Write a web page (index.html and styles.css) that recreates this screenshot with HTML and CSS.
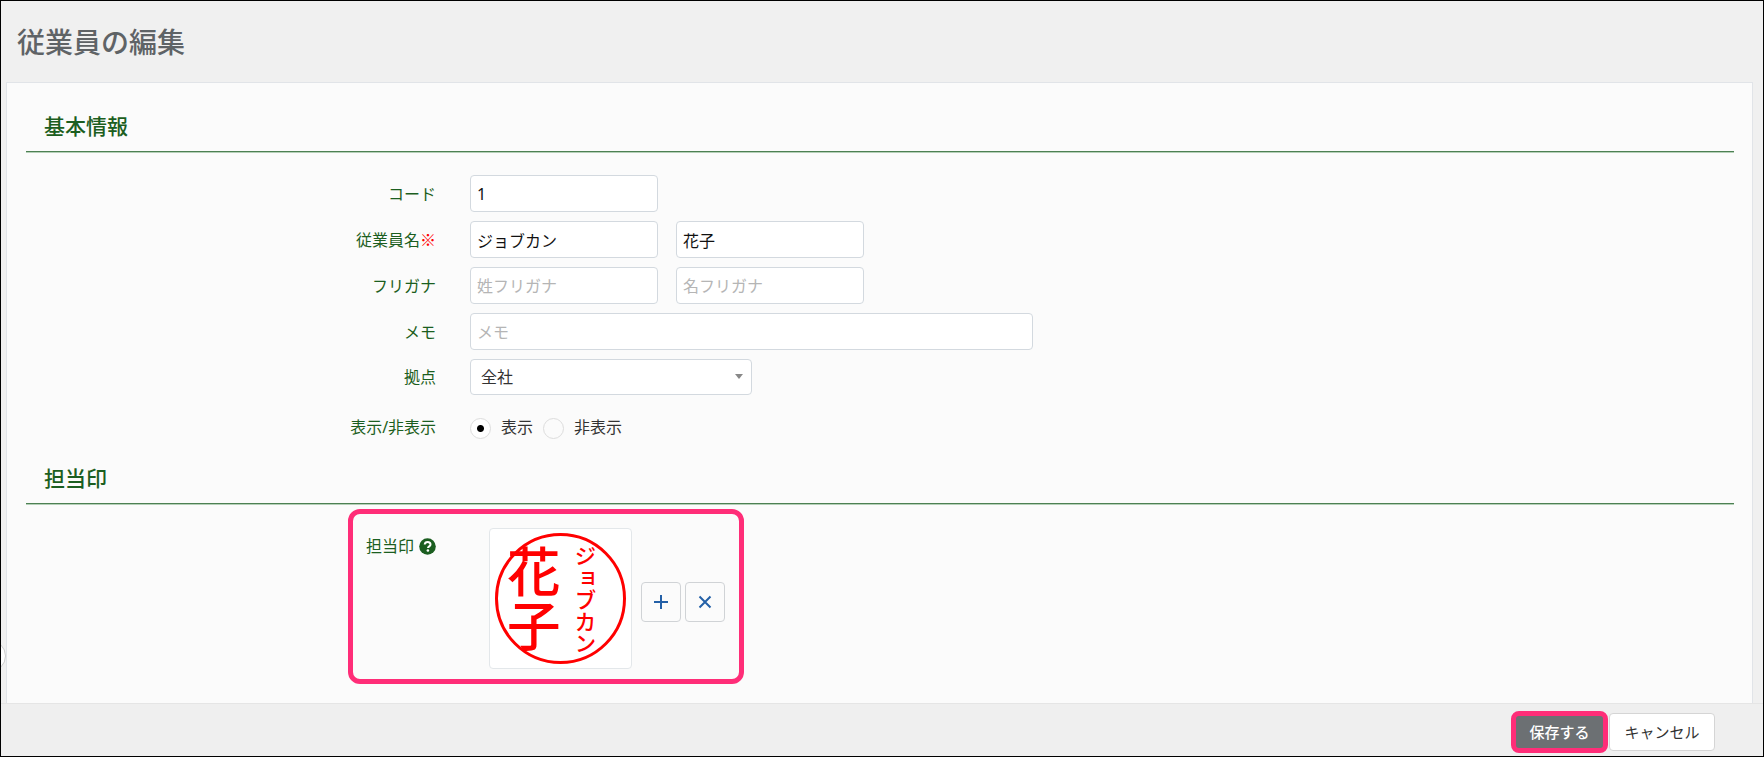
FILE: index.html
```html
<!DOCTYPE html>
<html lang="ja">
<head>
  <meta charset="UTF-8">
  <title>従業員の編集</title>
  <link rel="stylesheet" href="styles.css">
</head>
<body>
  <button class="drawer-toggle" type="button" aria-label="メニューを開く"></button>

  <header class="page-header">
    <h1>従業員の編集</h1>
  </header>

  <form id="employee" class="panel">
    <section>
      <h2>基本情報</h2>
      <div class="rows">
        <div class="row">
          <label class="name" for="code">コード</label>
          <input id="code" type="text" value="1">
        </div>
        <div class="row">
          <label class="name" for="lastName">従業員名<span class="required">※</span></label>
          <input id="lastName" type="text" value="ジョブカン">
          <input id="firstName" type="text" value="花子" aria-label="名">
        </div>
        <div class="row">
          <label class="name" for="lastKana">フリガナ</label>
          <input id="lastKana" type="text" placeholder="姓フリガナ">
          <input id="firstKana" type="text" placeholder="名フリガナ" aria-label="名フリガナ">
        </div>
        <div class="row">
          <label class="name" for="memo">メモ</label>
          <input id="memo" class="wide" type="text" placeholder="メモ">
        </div>
        <div class="row">
          <label class="name" for="office">拠点</label>
          <div class="select">
            <select id="office">
              <option>全社</option>
            </select>
          </div>
        </div>
        <div class="row radios" role="radiogroup" aria-labelledby="visibleLabel">
          <span id="visibleLabel" class="name">表示/非表示</span>
          <label><input type="radio" name="visible" checked>表示</label>
          <label><input type="radio" name="visible">非表示</label>
        </div>
      </div>
    </section>

    <section>
      <h2>担当印</h2>
      <div class="stamp-area">
        <div class="stamp-box">
          <div class="stamp-label">
            担当印
            <svg width="17" height="17" viewBox="0 0 17 17" aria-hidden="true">
              <circle cx="8.500" cy="8.500" r="8.300" fill="#1b5e20"/>
              <path d="M5.700 6.500C5.900 4.700 7 3.900 8.600 3.900c1.700 0 2.900 1 2.900 2.500 0 2-2.500 2-2.500 3.700" fill="none" stroke="#fff" stroke-width="2"/>
              <circle cx="8.900" cy="12.500" r="1.300" fill="#fff"/>
            </svg>
          </div>
          <div class="stamp-image">
            <svg viewBox="0 0 132 132" role="img" aria-label="花子 ジョブカンの印">
              <circle cx="66" cy="66" r="64.500" fill="none" stroke="#f00" stroke-width="3"/>
              <text class="seal-first" x="39" y="12">花子</text>
              <text class="seal-last" x="91" y="12">ジョブカン</text>
            </svg>
          </div>
          <button class="icon-button" type="button" aria-label="追加">
            <svg width="16" height="16" viewBox="0 0 16 16"><path d="M8 1v14M1 8h14"/></svg>
          </button>
          <button class="icon-button" type="button" aria-label="削除">
            <svg width="16" height="16" viewBox="0 0 16 16"><path d="M2.500 2.500l11 11M13.500 2.500l-11 11"/></svg>
          </button>
        </div>
      </div>
    </section>
  </form>

  <footer class="actions">
    <button class="save" type="submit" form="employee">保存する</button>
    <button class="cancel" type="button">キャンセル</button>
  </footer>
</body>
</html>
```

FILE: styles.css
```css
* {
  box-sizing: border-box;
}
body {
  position: relative;
  display: flex;
  flex-direction: column;
  min-height: 100vh;
  margin: 0;
  border: 1px solid #000;
  overflow: hidden;
  background: #f0f0f0;
  color: #333;
  font: 16px/24px "Noto Sans", "Noto Sans CJK JP", sans-serif;
}
input, select, button {
  font: inherit;
}
h1, h2 {
  margin: 0;
}
.page-header {
  padding: 21px 16px 19px;
}
h1 {
  color: #5f6366;
  font-size: 28px;
  font-weight: 500;
  line-height: 41px;
}
.panel {
  flex: 1;
  margin: 0 10px 0 5px;
  padding: 20px 18px 0 19px;
  border: 1px solid #e1e4e8;
  border-bottom: 0;
  background: #fbfbfb;
}
h2 {
  padding: 7px 18px 9px;
  border-bottom: 1px solid #4d8053;
  box-shadow: 0 1px #b5d0b8;
  color: #1b5e20;
  font-size: 21px;
  font-weight: 500;
  line-height: 32px;
}
.rows {
  display: flex;
  flex-direction: column;
  gap: 9px;
  padding: 23px 0 16px;
}
.row {
  display: flex;
  align-items: center;
}
.name {
  width: 26%;
  padding-right: 34px;
  color: #1b5e20;
  text-align: right;
}
.required {
  color: #f00;
  font-family: "Noto Sans CJK JP", sans-serif;
}
input[type="text"] {
  width: 188px;
  height: 37px;
  margin-right: 18px;
  padding: 0 6px;
  border: 1px solid #d3d9df;
  border-radius: 4px;
  background: #fff;
  color: #111;
}
input[type="text"].wide {
  width: 563px;
}
input::placeholder {
  color: #b5b5b5;
  opacity: 1;
}
.select {
  position: relative;
  width: 282px;
}
.select::after {
  position: absolute;
  top: 15px;
  right: 9px;
  border: 4px solid transparent;
  border-top: 5px solid #888;
  content: "";
  pointer-events: none;
}
select {
  display: block;
  width: 100%;
  height: 36px;
  padding: 0 10px;
  border: 1px solid #d3d9df;
  border-radius: 4px;
  appearance: none;
  background: #fff;
  color: #333;
}
.radios {
  padding-top: 11px;
}
.radios label {
  display: flex;
  align-items: center;
  margin-right: 10px;
}
input[type="radio"] {
  width: 21px;
  height: 21px;
  margin: 3px 10px 0 0;
  border: 1px solid #ddd;
  border-radius: 50%;
  appearance: none;
  background: #fbfbfb;
}
input[type="radio"]:checked {
  background: radial-gradient(circle, #000 3px, #fff 4px);
}

/* Stamp */
.stamp-area {
  padding: 5px 0 16px 322px;
}
.stamp-box {
  display: flex;
  align-items: center;
  width: 396px;
  padding: 14px 13px 10px;
  border: 5px solid #ff2d78;
  border-radius: 12px;
}
.stamp-label {
  display: flex;
  align-self: flex-start;
  align-items: center;
  gap: 5px;
  width: 123px;
  padding-top: 6px;
  color: #1b5e20;
}
.stamp-image {
  width: 143px;
  height: 141px;
  margin-right: 9px;
  padding: 4px;
  border: 1px solid #e3e7ea;
  border-radius: 4px;
  background: #fff;
}
.stamp-image svg {
  display: block;
  width: 100%;
  height: 100%;
}
.stamp-image text {
  fill: #f00;
  font-family: "Noto Sans CJK JP", sans-serif;
  font-weight: 500;
  writing-mode: vertical-rl;
}
.seal-first {
  font-size: 54px;
}
.seal-last {
  font-size: 22px;
}
.icon-button {
  display: flex;
  align-items: center;
  justify-content: center;
  width: 40px;
  height: 40px;
  margin-top: 6px;
  padding: 0;
  border: 1px solid #d0d3d6;
  border-radius: 4px;
  background: #fbfbfb;
}
.icon-button + .icon-button {
  margin-left: 4px;
}
.icon-button path {
  fill: none;
  stroke: #2460a7;
  stroke-width: 2;
}

/* Footer */
.actions {
  display: flex;
  align-items: center;
  justify-content: flex-end;
  gap: 1px;
  height: 53px;
  padding: 4px 48px 0 0;
  border-top: 1px solid #e5e5e5;
  background: #efefef;
}
.actions button {
  padding: 0;
  font-size: 15px;
}
.save {
  width: 97px;
  height: 42px;
  border: 5px solid #ff2d78;
  border-radius: 8px;
  background: #6c7073;
  color: #fff;
  font-weight: 500;
}
.cancel {
  width: 106px;
  height: 38px;
  border: 1px solid #d5d5d5;
  border-radius: 4px;
  background: #fff;
  color: #333;
}

.drawer-toggle {
  position: absolute;
  bottom: 84px;
  left: -27px;
  width: 32px;
  height: 32px;
  border: 1px solid #ccc;
  border-radius: 50%;
  background: #fff;
}
```
